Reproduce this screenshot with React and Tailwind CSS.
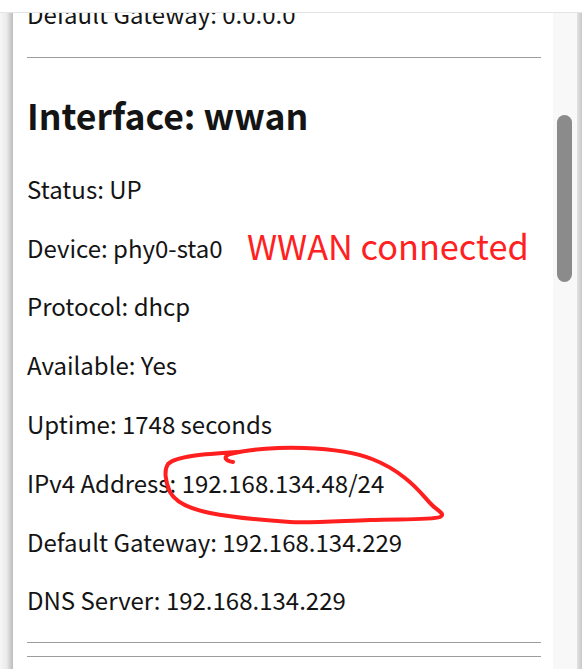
import React from 'react';

const rows = [
  'Status: UP',
  'Device: phy0-sta0',
  'Protocol: dhcp',
  'Available: Yes',
  'Uptime: 1748 seconds',
  'IPv4 Address: 192.168.134.48/24',
  'Default Gateway: 192.168.134.229',
  'DNS Server: 192.168.134.229',
];

const Row = ({ children }) => (
  <p className="h-[58.8px] text-[24px] leading-[58.8px] whitespace-nowrap">{children}</p>
);

const App = () => {
  return (
    <div
      className="relative w-[582px] h-[669px] overflow-hidden bg-white text-[#141414]"
      style={{ fontFamily: '"Noto Sans CJK SC", "Noto Sans", sans-serif' }}
    >
      {/* top bar */}
      <div className="h-[13px] border-b border-[#e4e4e4] bg-white" />

      <div className="flex h-[656px]">
        {/* left edge shadow */}
        <div className="w-[13px] bg-linear-to-r from-[#f6f6f6] via-[#ebebeb] to-[#bcbcbc]" />

        {/* page content */}
        <div className="w-[540px] overflow-hidden pl-[14px] pr-[12px]">
          <div className="mt-[-28px]">
            <Row>Default Gateway: 0.0.0.0</Row>
            <hr className="mt-[13px] border-0 border-t border-[#9c9c9c]" />
            <h2 className="mt-[36px] text-[35.6px] font-bold leading-[42px] whitespace-nowrap">Interface: wwan</h2>
            <div className="mt-[24px]">
              {rows.map((r) => (
                <Row key={r}>{r}</Row>
              ))}
            </div>
            <hr className="mt-[12px] border-0 border-t border-[#9c9c9c]" />
            <hr className="mt-[13px] border-0 border-t border-[#9c9c9c]" />
          </div>
        </div>

        {/* scrollbar */}
        <div className="w-[24px] bg-[#f8f8f8] pl-[4px] pt-[102px]">
          <div className="w-[15px] h-[167px] rounded-full bg-[#8b8b8b]" />
        </div>
        <div className="w-[5px] bg-linear-to-r from-[#e2e2e2] to-[#c9c9c9]" />
      </div>

      {/* annotations */}
      <span className="absolute left-[247px] top-[222px] text-[34.3px] leading-[46px] text-[#ff2121] whitespace-nowrap">
        WWAN connected
      </span>
      <svg className="absolute inset-0 pointer-events-none" width="582" height="669" viewBox="0 0 582 669">
        <path
          d="M233,462 C226,461 222,457 230,454 C250,449 280,447 304,448 C330,449 355,452 372,459 C385,464 395,470 405,478 C418,488 425,498 432,505 C438,511 446,514 440,517 C432,520 400,519 370,520 C340,521 310,523 290,522 C260,520 230,517 210,513 C190,509 176,503 170,492 C165,481 164,470 168,464 C176,456 205,454 237,452"
          fill="none"
          stroke="#ff1f1f"
          strokeWidth="4"
          strokeLinecap="round"
          strokeLinejoin="round"
        />
      </svg>
    </div>
  );
};

export default App;
